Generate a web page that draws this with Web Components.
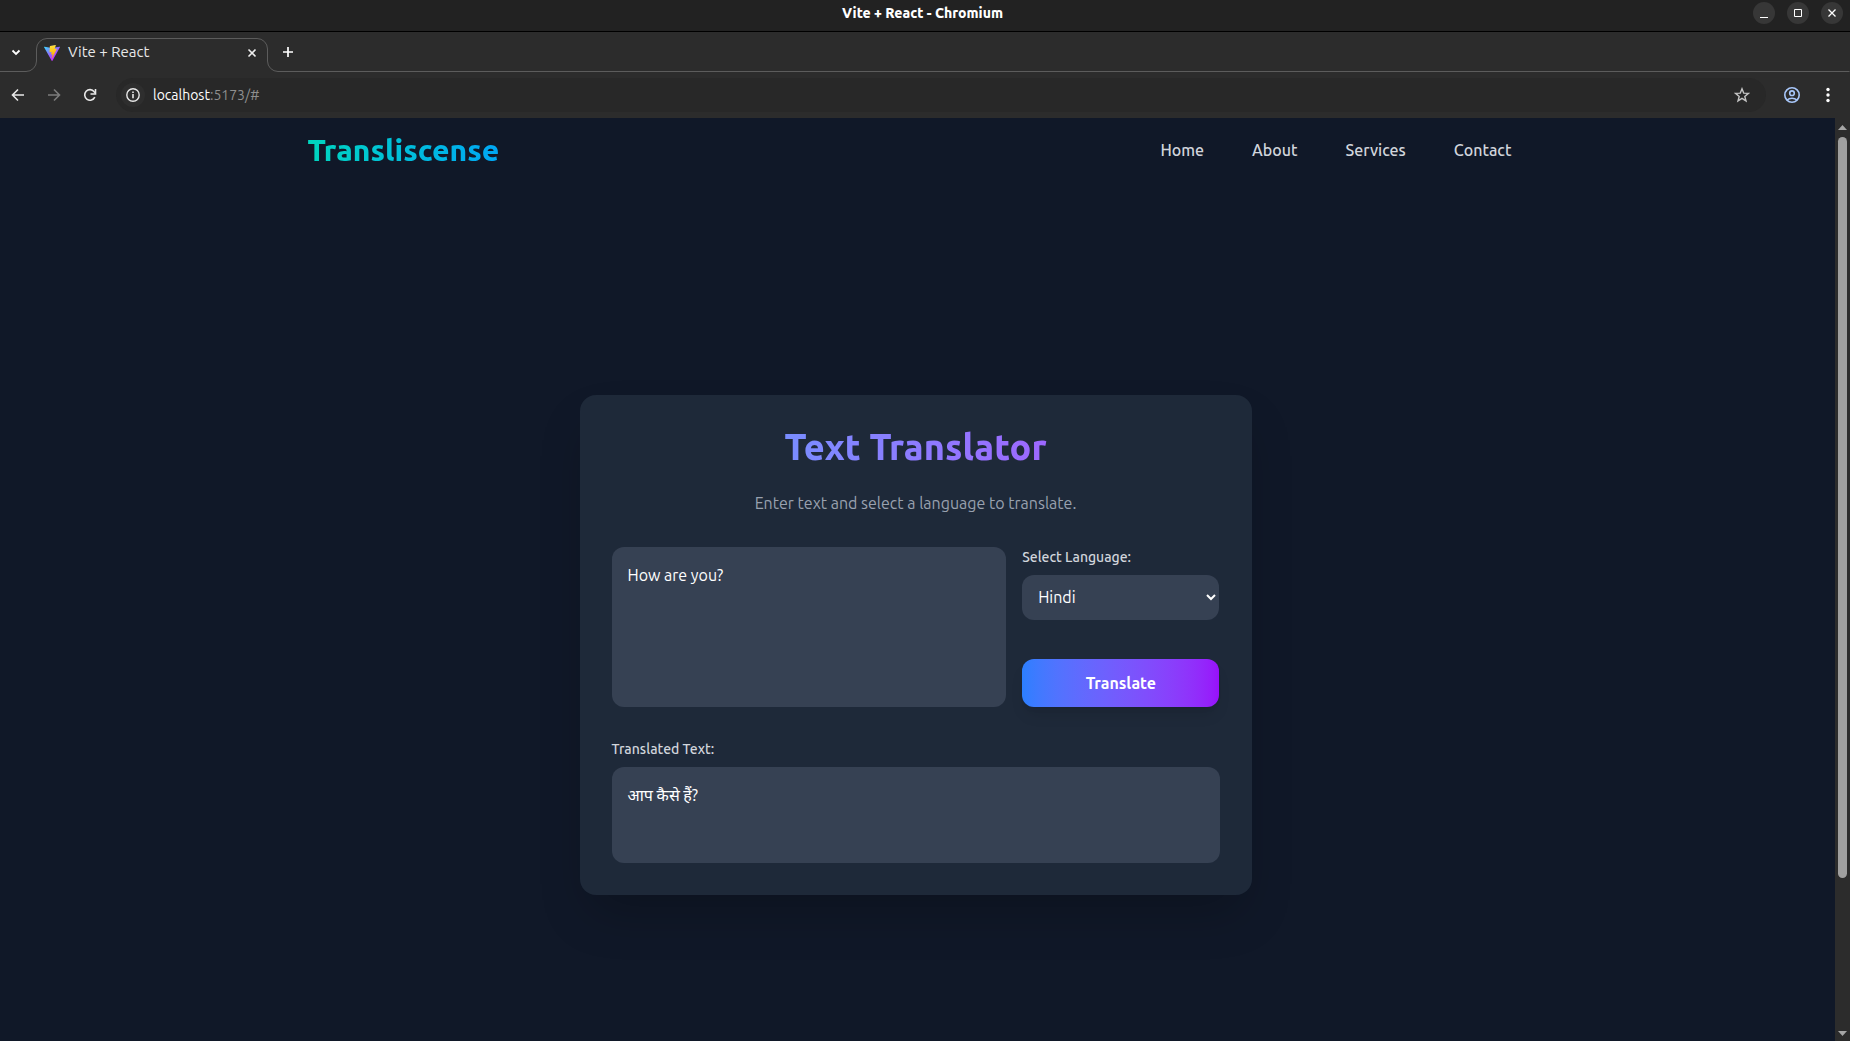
<!DOCTYPE html>
<html lang="en">
<head>
<meta charset="utf-8">
<title>Vite + React</title>
<style>
  html, body { margin: 0; height: 100%; }
  body { background: #101828; font-family: Ubuntu, "Noto Sans", sans-serif; overflow: hidden; }
</style>
</head>
<body>
<app-window>
  <title-bar slot="top">Vite + React - Chromium</title-bar>
  <tab-strip slot="top">Vite + React</tab-strip>
  <tool-bar slot="top"></tool-bar>
  <site-nav>
    <span slot="brand">Transliscense</span>
    <nav-link>Home</nav-link>
    <nav-link>About</nav-link>
    <nav-link>Services</nav-link>
    <nav-link>Contact</nav-link>
  </site-nav>
  <text-translator></text-translator>
  <scroll-track slot="scroll"></scroll-track>
</app-window>

<script>
const define = (name, html) => customElements.define(name, class extends HTMLElement {
  constructor() {
    super();
    this.attachShadow({ mode: 'open' }).innerHTML = html;
  }
});

define('app-window', `
<style>
  :host { display: flex; flex-direction: column; height: 100vh; }
  .view { display: flex; flex: 1; min-height: 0; }
  .page { flex: 1; min-width: 0; overflow: hidden; background: #101828; }
</style>
<slot name="top"></slot>
<div class="view"><div class="page"><slot></slot></div><slot name="scroll"></slot></div>`);

define('title-bar', `
<style>
  :host { display: grid; grid-template-columns: 1fr auto 1fr; align-items: center; height: 31px; padding-right: 5px;
    background: #222; border-bottom: 1px solid #000; color: #fff; font-size: 14px; font-weight: 800; }
  .title { grid-column: 2; line-height: 18px; padding-bottom: 5px; }
  .buttons { display: flex; gap: 12px; justify-content: flex-end; padding: 0 2px 5px 0; }
  button { width: 22px; height: 22px; padding: 0; border: 0; border-radius: 50%; background: #373737; color: #fff; }
  svg { display: block; }
</style>
<span class="title"><slot></slot></span>
<div class="buttons">
  <button aria-label="Minimize"><svg width="22" height="22"><path d="M7 15.5h8" stroke="currentColor"/></svg></button>
  <button aria-label="Maximize"><svg width="22" height="22"><path d="M7.5 7.5h7v7h-7z" fill="none" stroke="currentColor"/></svg></button>
  <button aria-label="Close"><svg width="22" height="22"><path d="M7.500 7.500l7 7M14.500 7.500l-7 7" stroke="currentColor" stroke-width="1.300"/></svg></button>
</div>`);

define('tab-strip', `
<style>
  :host { display: flex; align-items: flex-end; height: 40px; background: #2c2c2c; color: #e8e8e8; }
  button { border: 0; padding: 0; background: none; color: inherit; }
  svg { display: block; }
  .lead, .rest { display: flex; align-items: center; height: 39px; box-sizing: border-box; border-bottom: 1px solid #5c5c5c; }
  .lead { width: 26px; padding-left: 8px; }
  .rest { flex: 1; padding-left: 2px; border-right: 1px solid #2c2c2c; }
  .tab { position: relative; width: 252px; height: 34px; box-sizing: border-box; display: flex; align-items: center; gap: 8px; padding: 0 18px 5px; }
  .shape { position: absolute; inset: 0; }
  .name { flex: 1; font-size: 15px; line-height: 20px; padding-bottom: 2px; }
</style>
<div class="lead"><button aria-label="Search tabs"><svg width="16" height="16"><path d="M4.500 6.500L8 10l3.500-3.500" fill="none" stroke="#fff" stroke-width="1.800"/></svg></button></div>
<div class="tab">
  <svg class="shape" width="252" height="34" fill="none" stroke="#5c5c5c"><path d="M0 33.500A10.500 10.500 0 0 0 10.500 23V11A10.500 10.500 0 0 1 21 .5H231A10.500 10.500 0 0 1 241.500 11V23A10.500 10.500 0 0 0 252 33.500"/></svg>
  <svg width="16" height="16" viewBox="0 0 256 257">
    <defs>
      <linearGradient id="a" x1="-.8%" x2="57.6%" y1="7.700%" y2="78.400%"><stop offset="0" stop-color="#41d1ff"/><stop offset="1" stop-color="#bd34fe"/></linearGradient>
      <linearGradient id="b" x1="43.400%" x2="50.300%" y1="2.200%" y2="89%"><stop offset="0" stop-color="#ffea83"/><stop offset=".083" stop-color="#ffdd35"/><stop offset="1" stop-color="#ffa800"/></linearGradient>
    </defs>
    <path fill="url(#a)" d="M255.153 37.938L134.897 252.976c-2.483 4.440-8.862 4.466-11.382.048L.875 37.958c-2.746-4.814 1.371-10.646 6.827-9.670l120.385 21.517a6.537 6.537 0 0 0 2.322-.004l117.867-21.483c5.438-.991 9.574 4.796 6.877 9.620Z"/>
    <path fill="url(#b)" d="M185.432.063L96.440 17.501a3.268 3.268 0 0 0-2.634 3.014l-5.474 92.456a3.268 3.268 0 0 0 3.997 3.378l24.777-5.718c2.318-.535 4.413 1.507 3.936 3.838l-7.361 36.047c-.495 2.426 1.782 4.500 4.151 3.780l15.304-4.649c2.372-.72 4.652 1.360 4.150 3.788l-11.698 56.621c-.732 3.542 3.979 5.473 5.943 2.437l1.313-2.028l72.516-144.720c1.215-2.423-.88-5.186-3.540-4.672l-25.505 4.922c-2.396.462-4.435-1.770-3.759-4.114l16.646-57.705c.677-2.350-1.370-4.583-3.769-4.113Z"/>
  </svg>
  <span class="name"><slot></slot></span>
  <button aria-label="Close tab"><svg width="16" height="16"><path d="M4.500 4.500l7 7M11.500 4.500l-7 7" stroke="#eee" stroke-width="1.600"/></svg></button>
</div>
<div class="rest"><button aria-label="New tab"><svg width="16" height="16"><path d="M8 3v10M3 8h10" stroke="#fff" stroke-width="1.700"/></svg></button></div>`);

define('tool-bar', `
<style>
  :host { display: flex; align-items: center; height: 46px; box-sizing: border-box; padding: 0 14px 0 10px;
    background: #2c2c2c; color: #e8e8e8; }
  button { border: 0; padding: 0; background: none; color: inherit; display: flex; }
  svg { display: block; fill: none; stroke: currentColor; stroke-width: 1.600; }
  .nav { display: flex; gap: 20px; padding-right: 18px; }
  .box { flex: 1; display: flex; align-items: center; gap: 8px; height: 34px; box-sizing: border-box; padding: 0 16px 0 5px; border-radius: 17px; background: #282828; }
  .info { width: 24px; height: 24px; border-radius: 50%; background: #2e2e2e; align-items: center; justify-content: center; }
  .url { flex: 1; font-size: 14px; line-height: 20px; color: #8f8f8f; }
  .url b { font-weight: 400; color: #fff; }
  .star { color: #c4c4c4; }
  .end { display: flex; align-items: center; gap: 19px; padding-left: 17px; }
</style>
<div class="nav">
  <button aria-label="Back"><svg width="16" height="16"><path d="M14 8H3M8 2.500L2.500 8 8 13.500"/></svg></button>
  <button aria-label="Forward" style="color:#7c7c7c"><svg width="16" height="16"><path d="M2 8h11M8 2.500L13.500 8 8 13.500"/></svg></button>
  <button aria-label="Reload"><svg width="16" height="16"><path d="M12.800 10.200A5.300 5.300 0 1 1 12.200 4.700L13.300 6"/><path d="M13.500 2v5h-5" /></svg></button>
</div>
<div class="box">
  <button class="info" aria-label="Site information"><svg width="16" height="16"><circle cx="8" cy="8" r="6.200" stroke-width="1.400"/><path d="M8 7v4.300M8 4.500v1.600"/></svg></button>
  <span class="url"><b>localhost</b>:5173/#</span>
  <button class="star" aria-label="Bookmark this tab"><svg width="16" height="16"><path stroke-width="1.400" d="M8 1.800l1.700 4.300 4.700.3-3.600 3 1.200 4.500L8 11.400l-4 2.500 1.200-4.500-3.600-3 4.700-.3z"/></svg></button>
</div>
<div class="end">
  <button aria-label="Profile" style="color:#a8c7fa"><svg width="18" height="18"><circle cx="9" cy="9" r="7.200"/><circle cx="9" cy="7.200" r="2.300"/><path d="M4 14c2.800-2.400 7.200-2.400 10 0"/></svg></button>
  <button aria-label="Menu"><svg width="16" height="16"><g fill="#fff" stroke="none"><circle cx="8" cy="2.500" r="1.700"/><circle cx="8" cy="8" r="1.700"/><circle cx="8" cy="13.500" r="1.700"/></g></svg></button>
</div>`);

define('scroll-track', `
<style>
  :host { display: flex; flex-direction: column; align-items: center; width: 15px; box-sizing: border-box; padding: 7px 0 5px; background: #2c2c2c; }
  .rail { flex: 1; display: flex; flex-direction: column; width: 9px; padding: 7px 0; }
  .thumb { flex: 835; border-radius: 5px; background: #9f9f9f; }
  .gap { flex: 165; }
  svg { display: block; fill: #a6a6a6; }
</style>
<svg width="9" height="5"><path d="M0 5L4.500 0 9 5z"/></svg>
<div class="rail"><div class="thumb"></div><div class="gap"></div></div>
<svg width="9" height="5"><path d="M0 0h9L4.500 5z"/></svg>`);

define('nav-link', `
<style>
  :host { display: block; }
  a { color: #d1d5dc; text-decoration: none; font-size: 16px; font-weight: 500; line-height: 24px; }
</style>
<a href="#"><slot></slot></a>`);

define('site-nav', `
<style>
  :host { display: block; }
  header { display: flex; align-items: center; justify-content: space-between; height: 64px; max-width: 1204px; margin: 0 auto; padding-right: 16px; }
  .brand { font-size: 30px; line-height: 36px; font-weight: 800; color: transparent;
    background: linear-gradient(to right in oklab, #00d5be, #00a6f4); -webkit-background-clip: text; background-clip: text; }
  nav { display: flex; gap: 48px; }
</style>
<header>
  <div class="brand"><slot name="brand"></slot></div>
  <nav><slot></slot></nav>
</header>`);

define('text-translator', `
<style>
  :host { display: flex; align-items: center; justify-content: center; min-height: calc(100vh - 116px); padding-right: 4px; }
  .card { box-sizing: border-box; width: 100%; max-width: 672px; padding: 32px; border-radius: 16px;
    background: #1e2939; box-shadow: 0 25px 50px -12px rgba(0,0,0,.25); }
  h2 { margin: 0 0 24px; text-align: center; font-size: 36px; line-height: 40px; font-weight: 800; color: transparent;
    background: linear-gradient(to right in oklab, #51a2ff, #ad46ff); -webkit-background-clip: text; background-clip: text; }
  p { margin: 0 0 32px; text-align: center; color: #99a1af; font-size: 16px; line-height: 24px; }
  .row { display: grid; grid-template-columns: 2fr 1fr; gap: 16px; height: 160px; }
  textarea, select, output { box-sizing: border-box; border: 0; border-radius: 12px; background: #364153; color: #fff;
    font: 400 16px/24px Ubuntu, "Noto Sans", sans-serif; outline: none; }
  textarea { resize: none; padding: 16px; }
  .side { display: flex; flex-direction: column; justify-content: space-between; }
  label { display: block; color: #d1d5dc; font-size: 14px; font-weight: 500; line-height: 20px; margin-bottom: 8px; }
  select { width: 100%; height: 45px; padding: 12px; }
  button { height: 48px; border: 0; border-radius: 12px; color: #fff; font: 700 16px/24px Ubuntu, "Noto Sans", sans-serif;
    background: linear-gradient(to right in oklab, #2b7fff, #9810fa);
    box-shadow: 0 10px 15px -3px rgba(0,0,0,.1), 0 4px 6px -4px rgba(0,0,0,.1); }
  .result { padding-top: 32px; }
  output { display: block; min-height: 96px; padding: 16px; }
</style>
<section class="card">
  <h2>Text Translator</h2>
  <p>Enter text and select a language to translate.</p>
  <div class="row">
    <textarea aria-label="Text to translate" spellcheck="false">How are you?</textarea>
    <div class="side">
      <div>
        <label for="lang">Select Language:</label>
        <select id="lang"><option>Hindi</option><option>Spanish</option><option>French</option></select>
      </div>
      <button type="button">Translate</button>
    </div>
  </div>
  <div class="result">
    <label for="out">Translated Text:</label>
    <output id="out" lang="hi">आप कैसे हैं?</output>
  </div>
</section>`);
</script>
</body>
</html>
